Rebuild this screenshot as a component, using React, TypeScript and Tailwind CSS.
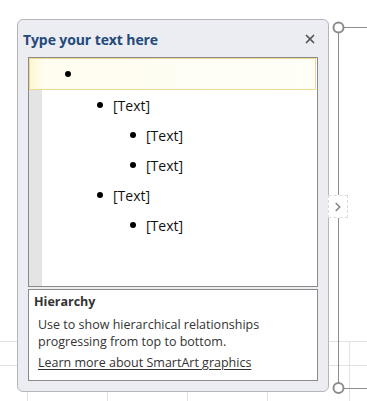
import { X, ChevronRight } from 'lucide-react';

const rows = [
  { level: 1, label: '[Text]' },
  { level: 2, label: '[Text]' },
  { level: 2, label: '[Text]' },
  { level: 1, label: '[Text]' },
  { level: 2, label: '[Text]' },
];

function Bullet() {
  return <span className="block w-[6px] h-[6px] rounded-full bg-black shrink-0" />;
}

function SheetGrid() {
  // faint spreadsheet grid behind the pane
  return (
    <svg className="absolute left-0 top-0" width="367" height="401">
      <g stroke="#e2e2e2" strokeWidth="1">
        <line x1="0" y1="341.5" x2="367" y2="341.5" />
        <line x1="0" y1="365.5" x2="367" y2="365.5" />
        <line x1="27.5" y1="341" x2="27.5" y2="401" />
        <line x1="107.5" y1="341" x2="107.5" y2="401" />
        <line x1="187.5" y1="341" x2="187.5" y2="401" />
        <line x1="267.5" y1="341" x2="267.5" y2="401" />
        <line x1="349.5" y1="341" x2="349.5" y2="401" />
      </g>
    </svg>
  );
}

function SelectionFrame() {
  // shape selection line and handles on the right
  return (
    <svg className="absolute left-0 top-0" width="367" height="401">
      <g stroke="#8c8c8c" fill="none">
        <line x1="344" y1="27.5" x2="367" y2="27.5" strokeWidth="1" />
        <line x1="344" y1="388.5" x2="367" y2="388.5" strokeWidth="1" />
        <line x1="338.5" y1="33" x2="338.5" y2="383" strokeWidth="1" />
        <circle cx="338.5" cy="27.5" r="5" strokeWidth="2" fill="#fff" />
        <circle cx="338.5" cy="388" r="5" strokeWidth="2" fill="#fff" />
      </g>
    </svg>
  );
}

export default function App() {
  return (
    <div
      className="relative w-[367px] h-[401px] bg-white overflow-hidden"
      style={{ fontFamily: '"Open Sans", "Noto Sans", sans-serif' }}
    >
      <SheetGrid />
      <SelectionFrame />

      <div className="relative ml-[17px] mt-[19px] w-[312px] h-[373px] rounded-[6px] border border-[#b4b4ba] bg-[#ecedf2] flex flex-col">
        {/* Header */}
        <div className="h-[37px] flex items-center justify-between pl-[5px] pr-[11px] pt-[1px]">
          <span className="text-[14px] font-bold text-[#24497a] tracking-[-0.1px]">Type your text here</span>
          <X size={14} strokeWidth={3} className="text-[#555]" />
        </div>

        {/* Text pane */}
        <div className="mx-[10px] h-[230px] border border-[#8a8a8a] bg-white flex flex-col">
          <div className="h-[32px] border border-[#f0d88f] bg-[linear-gradient(to_right,#fff6d2_0px,#fffdf0_14px,#fffef7_100%)] flex items-center pl-[35px] mr-[1px]">
            <Bullet />
          </div>
          <div className="flex flex-1">
            <div className="w-[13px] bg-[#e4e4e4]" />
            <div className="flex flex-col flex-1">
              {rows.map((r, i) => (
                <div
                  key={i}
                  className={`h-[30px] flex items-center gap-[10px] text-[14px] text-[#111] ${
                    r.level === 1 ? 'pl-[55px]' : 'pl-[88px]'
                  }`}
                >
                  <Bullet />
                  <span>{r.label}</span>
                </div>
              ))}
            </div>
          </div>
        </div>

        {/* Description */}
        <div className="mx-[10px] mt-[2px] h-[92px] border border-[#8a8a8a] bg-white pl-[5px] pt-[4px]">
          <div className="text-[12.5px] leading-[16px] font-bold text-[#333]">Hierarchy</div>
          <div className="pl-[4px] mt-[6px] text-[12.5px] leading-[17px] text-[#333]">
            <p>Use to show hierarchical relationships</p>
            <p>progressing from top to bottom.</p>
            <p className="mt-[4px] underline underline-offset-2">Learn more about SmartArt graphics</p>
          </div>
        </div>
      </div>

      {/* expand tab */}
      <div className="absolute left-[328px] top-[195px] w-[20px] h-[23px] border border-dashed border-[#dadada] bg-white flex items-center justify-center">
        <ChevronRight size={14} strokeWidth={3} className="text-[#888]" />
      </div>
    </div>
  );
}
